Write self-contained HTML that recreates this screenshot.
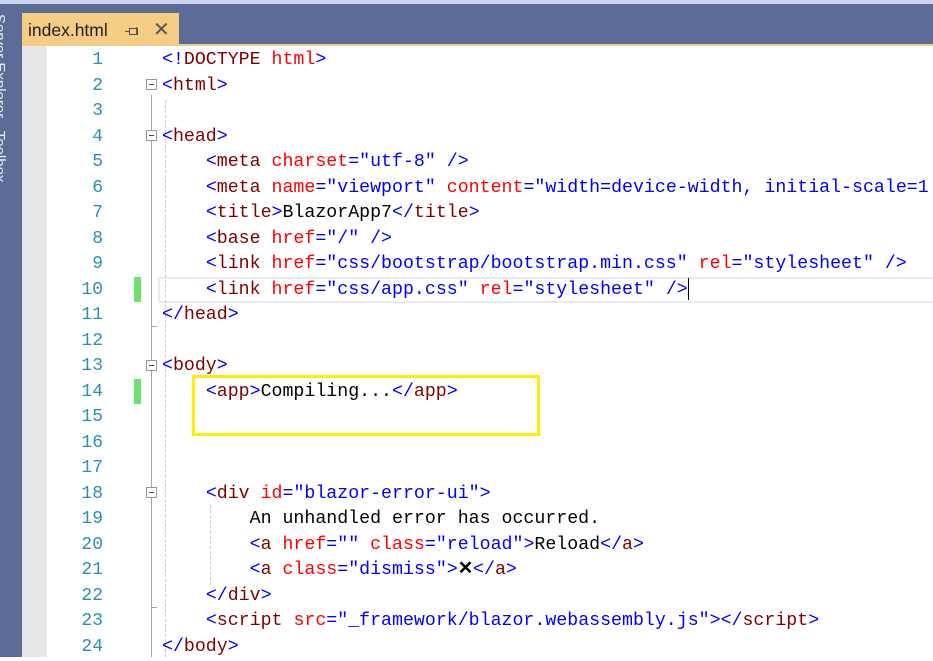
<!DOCTYPE html>
<html><head><style>
body{margin:0;width:933px;height:657px;overflow:hidden;position:relative;background:#fff;font-family:"Liberation Mono",monospace;}
.abs{position:absolute}
.ln{position:absolute;left:48px;width:55px;text-align:right;color:#2b91af;font-size:18px;line-height:25.52px;height:25.52px;margin-top:3px}
.cd{position:absolute;left:162px;font-size:18.25px;line-height:25.52px;white-space:pre;color:#000;margin-top:3px}
.b{color:#0000ff}.t{color:#800000}.a{color:#ff0000}.v{color:#0000ff}
.fold{position:absolute;left:146px;width:9px;height:9px;border:1px solid #999;background:#fff}
.fold:after{content:"";position:absolute;left:2px;top:4px;width:5px;height:1px;background:#444}
</style></head><body>
<div class="abs" style="left:0;top:0;width:933px;height:4px;background:#ccd5f0"></div>
<div class="abs" style="left:0;top:4px;width:933px;height:40px;background:#5d6b99"></div>
<div class="abs" style="left:0;top:4px;width:22px;height:653px;background:#5d6b99"></div>
<div class="abs" style="left:-8px;top:14px;width:16px;height:300px;color:#e8ecf5;font-family:'Liberation Sans',sans-serif;font-size:15px;writing-mode:vertical-rl;white-space:nowrap">Server Explorer&nbsp;&nbsp;&nbsp;Toolbox</div>
<div class="abs" style="left:22px;top:13px;width:157px;height:33px;background:#f5cc84"></div>
<div class="abs" style="left:22px;top:44px;width:911px;height:2px;background:#f5cc84"></div>
<div class="abs" style="left:28px;top:20px;font-family:'Liberation Sans',sans-serif;font-size:17.5px;color:#1e1e1e">index.html</div>
<div class="abs" style="left:129px;top:28px;width:7px;height:5px;border:1px solid #555;"></div>
<div class="abs" style="left:125px;top:31px;width:4px;height:1px;background:#555"></div>
<div class="abs" style="left:136px;top:27px;width:1px;height:8px;background:#555"></div>
<div class="abs" style="left:153px;top:17px;font-family:'Liberation Sans',sans-serif;font-size:20px;color:#555">✕</div>
<div class="abs" style="left:22px;top:46px;width:25px;height:611px;background:#e6e7e8"></div>
<div class="abs" style="left:158px;top:277px;width:780px;height:22px;border:2px solid #eaeaf2;border-right:none"></div>
<div class="abs" style="left:688px;top:278px;width:1px;height:22px;background:#000"></div>
<div class="abs" style="left:134px;top:277px;width:7px;height:25px;background:#6ce26c"></div>
<div class="abs" style="left:134px;top:379px;width:7px;height:25px;background:#6ce26c"></div>
<div class="abs" style="left:151px;top:95px;width:1px;height:562px;background:#a5a5a5"></div>
<div class="abs" style="left:151px;top:326px;width:6px;height:1px;background:#a5a5a5"></div>
<div class="abs" style="left:151px;top:607px;width:6px;height:1px;background:#a5a5a5"></div>
<div class="abs" style="left:165px;top:100px;width:0;height:557px;border-left:1px dashed #ccc"></div>
<div class="abs" style="left:210px;top:505px;width:0;height:80px;border-left:1px dashed #ccc"></div>
<div class="fold" style="top:79px"></div>
<div class="fold" style="top:130px"></div>
<div class="fold" style="top:360px"></div>
<div class="fold" style="top:487px"></div>
<div class="abs" style="left:192px;top:375px;width:342px;height:55px;border:3px solid #ffee00"></div>

<div class="ln" style="top:45px">1</div><div class="ln" style="top:70.5px">2</div><div class="ln" style="top:96px">3</div><div class="ln" style="top:121.6px">4</div><div class="ln" style="top:147.1px">5</div><div class="ln" style="top:172.6px">6</div><div class="ln" style="top:198.1px">7</div><div class="ln" style="top:223.6px">8</div><div class="ln" style="top:249.2px">9</div><div class="ln" style="top:274.7px">10</div><div class="ln" style="top:300.2px">11</div><div class="ln" style="top:325.7px">12</div><div class="ln" style="top:351.2px">13</div><div class="ln" style="top:376.8px">14</div><div class="ln" style="top:402.3px">15</div><div class="ln" style="top:427.8px">16</div><div class="ln" style="top:453.3px">17</div><div class="ln" style="top:478.8px">18</div><div class="ln" style="top:504.4px">19</div><div class="ln" style="top:529.9px">20</div><div class="ln" style="top:555.4px">21</div><div class="ln" style="top:580.9px">22</div><div class="ln" style="top:606.4px">23</div><div class="ln" style="top:632px">24</div>

<div class="cd" style="top:45px"><span class="b">&lt;!</span><span class="t">DOCTYPE</span> <span class="a">html</span><span class="b">&gt;</span></div>
<div class="cd" style="top:70.5px"><span class="b">&lt;</span><span class="t">html</span><span class="b">&gt;</span></div>
<div class="cd" style="top:121.6px"><span class="b">&lt;</span><span class="t">head</span><span class="b">&gt;</span></div>
<div class="cd" style="top:147.1px">    <span class="b">&lt;</span><span class="t">meta</span> <span class="a">charset</span><span class="b">=</span><span class="v">"utf-8"</span> <span class="b">/&gt;</span></div>
<div class="cd" style="top:172.6px">    <span class="b">&lt;</span><span class="t">meta</span> <span class="a">name</span><span class="b">=</span><span class="v">"viewport"</span> <span class="a">content</span><span class="b">=</span><span class="v">"width=device-width, initial-scale=1</span></div>
<div class="cd" style="top:198.1px">    <span class="b">&lt;</span><span class="t">title</span><span class="b">&gt;</span>BlazorApp7<span class="b">&lt;/</span><span class="t">title</span><span class="b">&gt;</span></div>
<div class="cd" style="top:223.6px">    <span class="b">&lt;</span><span class="t">base</span> <span class="a">href</span><span class="b">=</span><span class="v">"/"</span> <span class="b">/&gt;</span></div>
<div class="cd" style="top:249.2px">    <span class="b">&lt;</span><span class="t">link</span> <span class="a">href</span><span class="b">=</span><span class="v">"css/bootstrap/bootstrap.min.css"</span> <span class="a">rel</span><span class="b">=</span><span class="v">"stylesheet"</span> <span class="b">/&gt;</span></div>
<div class="cd" style="top:274.7px">    <span class="b">&lt;</span><span class="t">link</span> <span class="a">href</span><span class="b">=</span><span class="v">"css/app.css"</span> <span class="a">rel</span><span class="b">=</span><span class="v">"stylesheet"</span> <span class="b">/&gt;</span></div>
<div class="cd" style="top:300.2px"><span class="b">&lt;/</span><span class="t">head</span><span class="b">&gt;</span></div>
<div class="cd" style="top:351.2px"><span class="b">&lt;</span><span class="t">body</span><span class="b">&gt;</span></div>
<div class="cd" style="top:376.8px">    <span class="b">&lt;</span><span class="t">app</span><span class="b">&gt;</span>Compiling...<span class="b">&lt;/</span><span class="t">app</span><span class="b">&gt;</span></div>
<div class="cd" style="top:478.8px">    <span class="b">&lt;</span><span class="t">div</span> <span class="a">id</span><span class="b">=</span><span class="v">"blazor-error-ui"</span><span class="b">&gt;</span></div>
<div class="cd" style="top:504.4px">        An unhandled error has occurred.</div>
<div class="cd" style="top:529.9px">        <span class="b">&lt;</span><span class="t">a</span> <span class="a">href</span><span class="b">=</span><span class="v">""</span> <span class="a">class</span><span class="b">=</span><span class="v">"reload"</span><span class="b">&gt;</span>Reload<span class="b">&lt;/</span><span class="t">a</span><span class="b">&gt;</span></div>
<div class="cd" style="top:555.4px">        <span class="b">&lt;</span><span class="t">a</span> <span class="a">class</span><span class="b">=</span><span class="v">"dismiss"</span><span class="b">&gt;</span><b>✕</b><span class="b">&lt;/</span><span class="t">a</span><span class="b">&gt;</span></div>
<div class="cd" style="top:580.9px">    <span class="b">&lt;/</span><span class="t">div</span><span class="b">&gt;</span></div>
<div class="cd" style="top:606.4px">    <span class="b">&lt;</span><span class="t">script</span> <span class="a">src</span><span class="b">=</span><span class="v">"_framework/blazor.webassembly.js"</span><span class="b">&gt;&lt;/</span><span class="t">script</span><span class="b">&gt;</span></div>
<div class="cd" style="top:632px"><span class="b">&lt;/</span><span class="t">body</span><span class="b">&gt;</span></div>
</body></html>
